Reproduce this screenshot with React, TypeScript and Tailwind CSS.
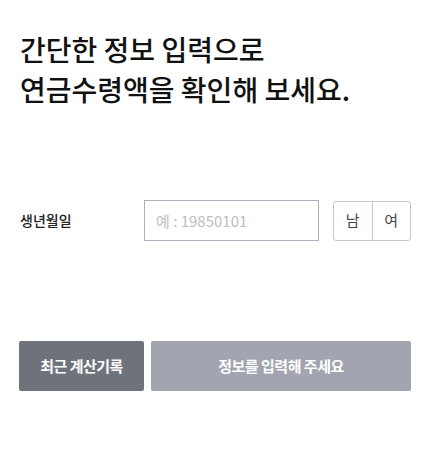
import { useState } from "react";

const FONT = { fontFamily: '"Noto Sans CJK KR", "Noto Sans", sans-serif' };

export default function App() {
  const [birth, setBirth] = useState("");
  const [gender, setGender] = useState<"M" | "F" | null>(null);

  const ready = birth.length === 8 && gender !== null;

  return (
    <div className="min-h-[456px] w-[440px] bg-white pl-[20px] pr-[29px] pt-[29px]" style={FONT}>
      <h1 className="text-[28px] font-medium leading-[40px] text-[#111]">
        간단한 정보 입력으로
        <br />
        연금수령액을 확인해 보세요.
      </h1>

      <div className="mt-[91px] flex items-center">
        <label className="w-[124px] text-[14px] font-medium text-[#222]">생년월일</label>
        <input
          value={birth}
          onChange={(e) => setBirth(e.target.value)}
          placeholder="예 : 19850101"
          className="h-[41px] w-[175px] border border-[#a9b1bc] px-[11px] text-[15px] text-[#333] outline-none placeholder:text-[#bdbdbd]"
        />
        <div className="ml-[14px] flex h-[40px] w-[78px] overflow-hidden rounded-[3px] border border-[#c4c8cf]">
          <button
            onClick={() => setGender("M")}
            className={`flex-1 text-[15px] ${gender === "M" ? "bg-[#6e727a] text-white" : "text-[#444]"}`}
          >
            남
          </button>
          <div className="w-px bg-[#c4c8cf]" />
          <button
            onClick={() => setGender("F")}
            className={`flex-1 text-[15px] ${gender === "F" ? "bg-[#6e727a] text-white" : "text-[#444]"}`}
          >
            여
          </button>
        </div>
      </div>

      <div className="-ml-px mt-[100px] flex gap-[7px]">
        <button className="h-[50px] w-[125px] rounded-[2px] bg-[#6e727b] text-[15px] font-bold tracking-[-0.5px] text-white">
          최근 계산기록
        </button>
        <button
          disabled={!ready}
          className={`h-[50px] flex-1 rounded-[2px] text-[15px] font-bold tracking-[-0.5px] text-white ${
            ready ? "bg-[#2f6fe4]" : "bg-[#a2a5af]"
          }`}
        >
          정보를 입력해 주세요
        </button>
      </div>
    </div>
  );
}
